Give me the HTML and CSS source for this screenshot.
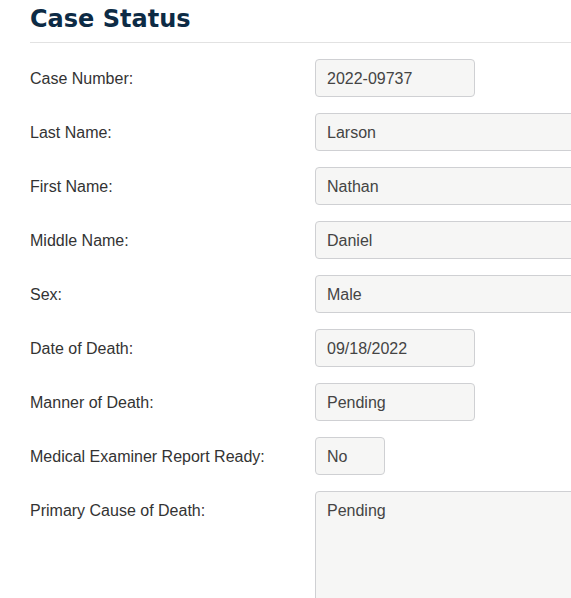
FILE: index.html
```html
<!DOCTYPE html>
<html>
<head>
<meta charset="utf-8">
<link rel="stylesheet" href="styles.css">
</head>
<body>
<div class="page">
  <h1 class="title">Case Status</h1>
  <div class="form">
    <div class="row"><div class="label">Case Number:</div><div class="field short">2022-09737</div></div>
    <div class="row"><div class="label">Last Name:</div><div class="field long">Larson</div></div>
    <div class="row"><div class="label">First Name:</div><div class="field long">Nathan</div></div>
    <div class="row"><div class="label">Middle Name:</div><div class="field long">Daniel</div></div>
    <div class="row"><div class="label">Sex:</div><div class="field long">Male</div></div>
    <div class="row"><div class="label">Date of Death:</div><div class="field short">09/18/2022</div></div>
    <div class="row"><div class="label">Manner of Death:</div><div class="field short">Pending</div></div>
    <div class="row"><div class="label">Medical Examiner Report Ready:</div><div class="field tiny">No</div></div>
    <div class="row"><div class="label">Primary Cause of Death:</div><div class="field long area">Pending</div></div>
  </div>
</div>
</body>
</html>
```
FILE: styles.css
```css
html, body {
  margin: 0;
  padding: 0;
  overflow: hidden;
  background: #ffffff;
}
.page {
  padding: 0 0 0 30px;
  width: 700px;
  font-family: "Liberation Sans", Arial, sans-serif;
}
.title {
  margin: 0;
  padding-top: 4px;
  font-family: "DejaVu Sans", Verdana, sans-serif;
  font-weight: bold;
  font-size: 24px;
  line-height: 30px;
  color: #0d2b45;
  padding-bottom: 8px;
  border-bottom: 1px solid #e2e2e2;
}
.form {
  display: flex;
  flex-direction: column;
  gap: 16px;
  padding-top: 16px;
}
.row {
  display: flex;
  align-items: flex-start;
}
.label {
  box-sizing: border-box;
  width: 285px;
  height: 38px;
  padding-top: 1px;
  font-size: 16px;
  line-height: 37px;
  color: #333333;
}
.field {
  box-sizing: border-box;
  height: 38px;
  padding: 1px 11px 0 11px;
  font-size: 16px;
  line-height: 35px;
  color: #444444;
  background: #f6f6f5;
  border: 1px solid #cfd0d3;
  border-radius: 4px;
}
.short { width: 160px; }
.tiny { width: 70px; }
.long { width: 320px; }
.area { height: 140px; }
```
